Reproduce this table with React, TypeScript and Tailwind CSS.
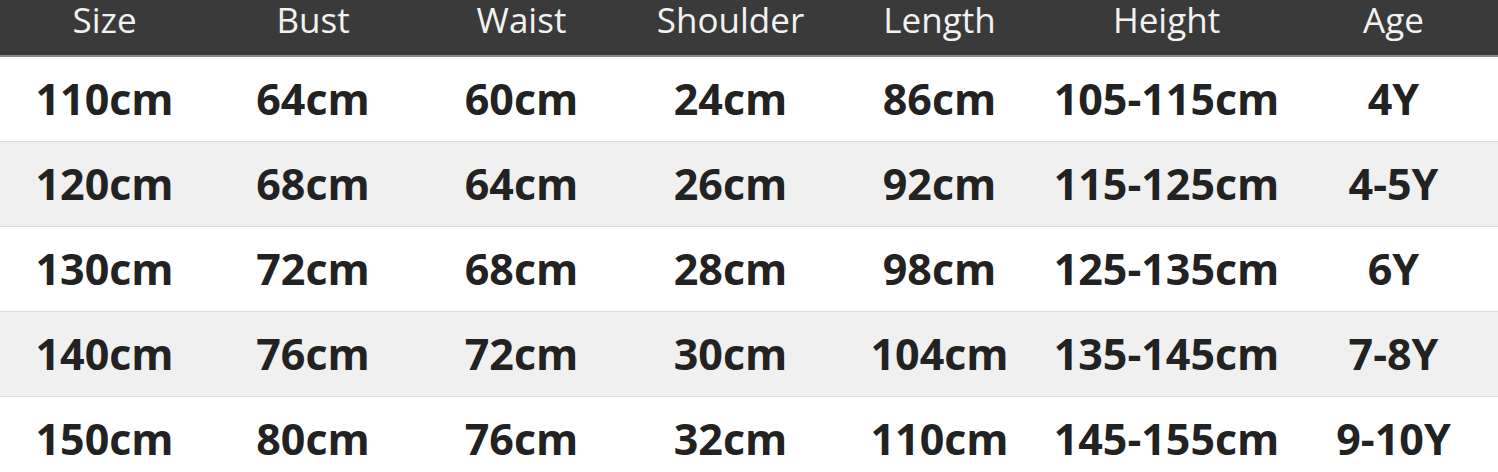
const headers = ["Size", "Bust", "Waist", "Shoulder", "Length", "Height", "Age"];

const rows = [
  ["110cm", "64cm", "60cm", "24cm", "86cm", "105-115cm", "4Y"],
  ["120cm", "68cm", "64cm", "26cm", "92cm", "115-125cm", "4-5Y"],
  ["130cm", "72cm", "68cm", "28cm", "98cm", "125-135cm", "6Y"],
  ["140cm", "76cm", "72cm", "30cm", "104cm", "135-145cm", "7-8Y"],
  ["150cm", "80cm", "76cm", "32cm", "110cm", "145-155cm", "9-10Y"],
];

const cols = "grid grid-cols-[209px_208px_209px_209px_209px_245px_209px]";

export default function App() {
  return (
    <div
      className="w-[1498px] h-[472px] overflow-hidden bg-white"
      style={{ fontFamily: '"Open Sans", "Noto Sans", sans-serif' }}
    >
      <div className={`${cols} h-[57px] bg-[#3a3a3a] border-b-2 border-[#8a8a8a] text-[#f2f2f2] text-[35px] leading-[40px]`}>
        {headers.map((h) => (
          <div key={h} className="flex justify-center pt-0">
            {h}
          </div>
        ))}
      </div>
      {rows.map((r, i) => (
        <div
          key={r[0]}
          className={`${cols} h-[85px] border-b border-[#dcdcdc] ${i % 2 === 1 ? "bg-[#f0f0f0]" : "bg-white"} text-[#222] text-[43px] font-bold`}
        >
          {r.map((c, j) => (
            <div key={j} className="flex items-center justify-center">
              {c}
            </div>
          ))}
        </div>
      ))}
    </div>
  );
}
